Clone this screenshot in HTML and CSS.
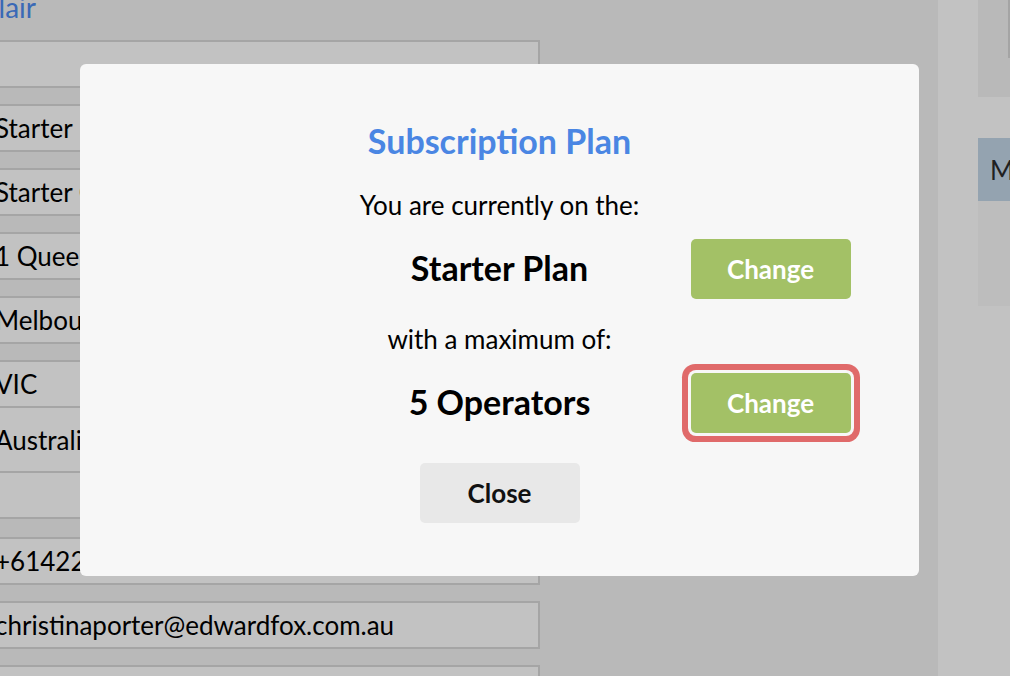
FILE: index.html
```html
<!DOCTYPE html>
<html lang="en">
<head>
  <meta charset="UTF-8">
  <meta name="viewport" content="width=device-width, initial-scale=1.0">
  <title>Client Details - Subscription Plan</title>
  <link rel="stylesheet" href="styles.css">
</head>
<body>
  <div class="page">
    <main class="main">
      <h2 class="client-name"><span>Christina Sinclair</span></h2>

      <div class="form">
        <div class="field"></div>
        <div class="field">Starter Plan</div>
        <div class="field">Starter Operators</div>
        <div class="field">1 Queen Street</div>
        <div class="field">Melbourne</div>
        <div class="field field-tight">VIC</div>
        <div class="field field-select">Australia</div>
        <div class="field field-short"></div>
        <div class="field">+61422 555 018</div>
        <div class="field">christinaporter@edwardfox.com.au</div>
        <div class="field"></div>
      </div>
    </main>

    <aside class="sidebar">
      <div class="card card-top">
        <div class="card-bar"></div>
      </div>
      <div class="card">
        <div class="card-header">Messages</div>
        <div class="card-body"></div>
      </div>
    </aside>
  </div>

  <div class="overlay">
    <div class="modal">
      <h1 class="modal-title">Subscription Plan</h1>
      <p class="modal-text">You are currently on the:</p>
      <div class="plan-row">
        <span class="plan-value">Starter Plan</span>
        <button class="btn btn-change">Change</button>
      </div>
      <p class="modal-text">with a maximum of:</p>
      <div class="plan-row">
        <span class="plan-value">5 Operators</span>
        <button class="btn btn-change highlighted">Change</button>
      </div>
      <button class="btn btn-close">Close</button>
    </div>
  </div>
</body>
</html>
```

FILE: styles.css
```css
* {
  box-sizing: border-box;
}
body {
  margin: 0;
  font-family: 'Lato', 'Open Sans', sans-serif;
  color: #000;
  background: #f4f4f4;
  overflow: hidden;
}
.page {
  display: flex;
  height: 676px;
  overflow: hidden;
}
.main {
  width: 938px;
  background: #f4f4f4;
}
.client-name {
  width: 36px;
  margin: -5px 0 21px;
  display: flex;
  justify-content: flex-end;
  white-space: nowrap;
  font-size: 28px;
  line-height: 24px;
  font-weight: 400;
  color: #4d8af0;
}
.form {
  width: 554px;
  margin-left: -14px;
}
.field {
  height: 48px;
  margin-bottom: 16px;
  padding: 0 7px;
  border: 2px solid #d9d9d9;
  background: #fff;
  display: flex;
  align-items: center;
  font-size: 26px;
  white-space: nowrap;
  overflow: hidden;
}
.field-tight {
  margin-bottom: 0;
}
.field-select {
  height: 65px;
  margin-bottom: 0;
  border: none;
  border-bottom: 2px solid #d9d9d9;
  padding-left: 9px;
}
.field-short {
  height: 46px;
  border-top: none;
  margin-bottom: 18px;
}
.sidebar {
  flex: 1;
  background: #fff;
  padding-left: 40px;
  overflow: hidden;
}
.card {
  width: 260px;
}
.card-top {
  height: 97px;
  margin-bottom: 41px;
  background: #f4f4f4;
  position: relative;
}
.card-bar {
  position: absolute;
  left: 30px;
  top: 0;
  width: 3px;
  height: 58px;
  background: #d8d8d8;
}
.card-header {
  height: 63px;
  padding-left: 12px;
  display: flex;
  align-items: center;
  background: #c3d6e8;
  color: #2b2b2b;
  font-size: 26px;
}
.card-body {
  height: 105px;
  background: #f9f9f9;
}

/* modal */
.overlay {
  position: fixed;
  inset: 0;
  background: rgba(0, 0, 0, 0.24);
  padding: 64px 0 0 80px;
}
.modal {
  width: 839px;
  padding: 57px 0 53px;
  background: #f7f7f7;
  border-radius: 6px;
  text-align: center;
}
.modal-title {
  margin: 0;
  font-size: 34px;
  line-height: 40px;
  font-weight: 700;
  color: #4a86e3;
}
.modal-text {
  margin: 29px 0 0;
  font-size: 26px;
  line-height: 30px;
}
.plan-row + .modal-text {
  margin-top: 25px;
}
.plan-row {
  display: grid;
  grid-template-columns: 1fr 200px 1fr;
  align-items: center;
  margin-top: 19px;
}
.plan-value {
  grid-column: 2;
  font-size: 34px;
  font-weight: 700;
  line-height: 40px;
  white-space: nowrap;
  margin-top: -3px;
}
.btn {
  width: 160px;
  height: 60px;
  border: none;
  border-radius: 5px;
  font-family: 'Lato', sans-serif;
  font-size: 26px;
  font-weight: 700;
  cursor: pointer;
}
.btn-change {
  justify-self: start;
  margin-left: 91px;
  background: #a3c166;
  color: #fff;
}
.highlighted {
  box-shadow: 0 0 0 3px #f7f7f7, 0 0 0 9px #e06a6a;
}
.btn-close {
  margin-top: 30px;
  background: #e8e8e8;
  color: #111;
}
```
